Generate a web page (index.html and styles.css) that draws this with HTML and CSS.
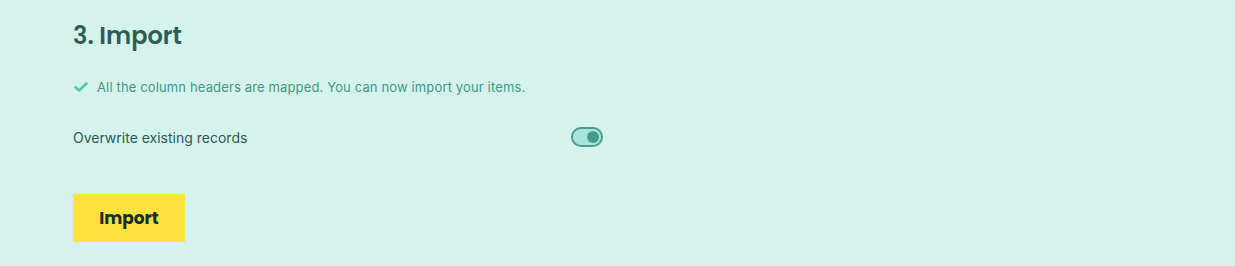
FILE: index.html
```html
<!DOCTYPE html>
<html>
<head>
<meta charset="utf-8">
<link rel="stylesheet" href="styles.css">
</head>
<body>
<section class="step">
  <h2 class="title">3. Import</h2>
  <p class="status">
    <svg class="check" width="14" height="10" viewBox="0 0 14 10"><path d="M1.5 5.2 L5 8.5 L12.5 1.5" fill="none" stroke="#4fc7b3" stroke-width="2.6" stroke-linecap="round" stroke-linejoin="round"/></svg>
    <span>All the column headers are mapped. You can now import your items.</span>
  </p>
  <div class="option">
    <span class="label">Overwrite existing records</span>
    <span class="toggle"><span class="knob"></span></span>
  </div>
  <button class="btn">Import</button>
</section>
</body>
</html>
```
FILE: styles.css
```css
html, body {
  margin: 0;
  padding: 0;
  background: #d6f2ed;
  height: 100%;
}
.step {
  padding: 20px 0 0 73px;
  font-family: "Inter", "Noto Sans", sans-serif;
}
.title {
  margin: 0;
  font-family: "Poppins", "Inter", sans-serif;
  font-weight: 600;
  font-size: 24px;
  line-height: 32px;
  color: #2c5e53;
  letter-spacing: 0;
}
.status {
  margin: 26px 0 0 0;
  display: flex;
  align-items: center;
  gap: 9px;
  font-size: 13px;
  line-height: 18px;
  letter-spacing: 0.14px;
  color: #3f9886;
}
.check {
  margin-left: 1px;
  display: block;
}
.option {
  margin-top: 31px;
  width: 530px;
  display: flex;
  align-items: center;
  justify-content: space-between;
  height: 20px;
}
.label {
  font-size: 14px;
  color: #2e5a52;
}
.toggle {
  box-sizing: border-box;
  width: 32px;
  height: 20px;
  border: 2px solid #4c9c8c;
  border-radius: 10px;
  background: #a9e4da;
  display: flex;
  align-items: center;
  justify-content: flex-end;
  padding-right: 2px;
}
.knob {
  width: 12px;
  height: 12px;
  border-radius: 50%;
  background: #4a9a8a;
}
.btn {
  margin-top: 47px;
  display: block;
  width: 112px;
  height: 48px;
  border: 0;
  background: #ffe23f;
  color: #14302b;
  font-family: "Poppins", "Inter", sans-serif;
  font-weight: 700;
  font-size: 17px;
  padding: 0;
  cursor: pointer;
}
```
